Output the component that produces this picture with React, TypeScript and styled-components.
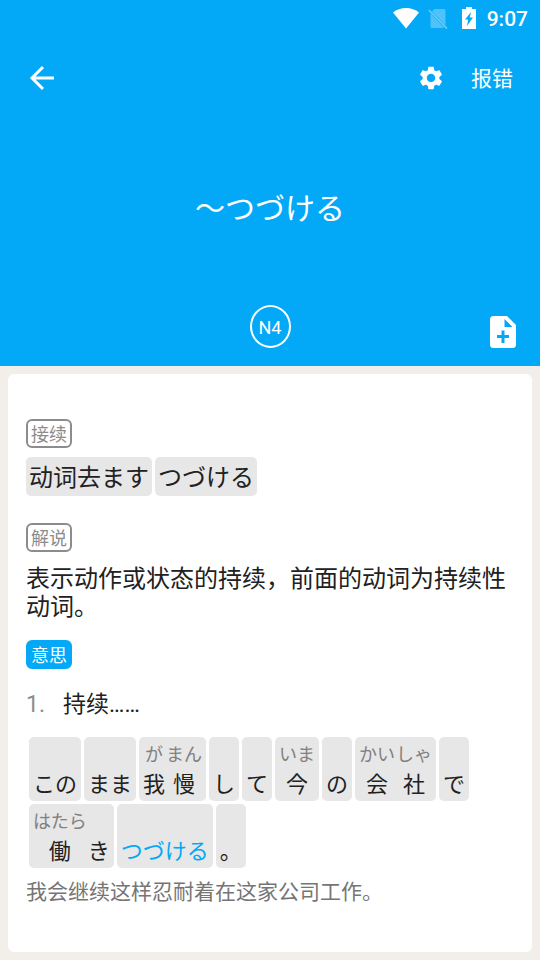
import React from "react";
import styled, { createGlobalStyle } from "styled-components";
import { MdSettings } from "react-icons/md";

const BLUE = "#03a9f7";

const GlobalStyle = createGlobalStyle`
  * { box-sizing: border-box; }
  body {
    margin: 0;
    background: #f2eeea;
    color: #212121;
    font-family: Roboto, "Noto Sans CJK SC", "Noto Sans CJK JP", sans-serif;
  }
  h1, p { margin: 0; font-weight: 400; }
`;

const Page = styled.div`
  display: flex;
  flex-direction: column;
  min-height: 100vh;
`;

const Header = styled.header`
  display: flex;
  flex-direction: column;
  background: ${BLUE};
  color: #fff;
`;

const StatusBar = styled.div`
  display: flex;
  justify-content: flex-end;
  align-items: center;
  height: 36px;
  padding-right: 12px;
`;

const StatusIcon = styled.svg<{ $gap: number }>`
  display: block;
  margin-right: ${(p) => p.$gap}px;
`;

const Clock = styled.time`
  font-size: 21px;
  font-weight: 500;
  line-height: 24px;
  padding-top: 2px;
`;

const AppBar = styled.nav`
  display: flex;
  align-items: center;
  height: 84px;
  padding: 0 27px 0 26px;
`;

const IconButton = styled.button`
  display: flex;
  padding: 0;
  border: 0;
  background: none;
  color: inherit;
  cursor: pointer;
`;

const BarActions = styled.div`
  display: flex;
  align-items: center;
  gap: 26px;
  margin-left: auto;
`;

const TextButton = styled(IconButton)`
  padding-top: 2px;
  font-family: inherit;
  font-size: 21px;
  line-height: 28px;
`;

const Title = styled.h1`
  margin: 62px 0 75px;
  font-family: "Noto Sans CJK JP", sans-serif;
  font-size: 30px;
  line-height: 48px;
  text-align: center;
`;

const HeaderFooter = styled.div`
  display: grid;
  grid-template-columns: 1fr auto 1fr;
  align-items: start;
  height: 61px;
  padding: 0 24px;
`;

const Level = styled.span`
  grid-column: 2;
  display: flex;
  align-items: center;
  justify-content: center;
  width: 41px;
  height: 43px;
  padding-top: 2px;
  border: 2px solid #fff;
  border-radius: 50%;
  font-size: 18px;
  line-height: 24px;
`;

const AddButton = styled(IconButton)`
  justify-self: end;
  margin-top: 11px;
`;

const Card = styled.main`
  flex: 1;
  margin: 8px;
  padding: 45px 18px;
  border-radius: 6px;
  background: #fff;
`;

const Section = styled.section<{ $top?: number }>`
  display: flex;
  flex-direction: column;
  align-items: flex-start;
  margin-top: ${(p) => p.$top ?? 0}px;
`;

const Badge = styled.span<{ $filled?: boolean }>`
  height: 29px;
  padding: 0 3px;
  border: 2px solid ${(p) => (p.$filled ? BLUE : "#8c8c8c")};
  border-radius: 6px;
  background: ${(p) => (p.$filled ? BLUE : "transparent")};
  color: ${(p) => (p.$filled ? "#fff" : "#8c8c8c")};
  font-size: 18px;
  line-height: 27px;
`;

const Patterns = styled.div`
  display: flex;
  flex-wrap: wrap;
  gap: 3px;
  margin-top: 9px;
`;

const Pattern = styled.span`
  padding: 3px 3px 0;
  border-radius: 5px;
  background: #e7e7e7;
  font-size: 24px;
  line-height: 36px;
`;

const Explanation = styled.p`
  margin-top: 13px;
  font-size: 24px;
  line-height: 28px;
`;

const Meaning = styled.div`
  display: flex;
  gap: 18px;
  margin-top: 20px;
  font-size: 23px;
  line-height: 32px;
`;

const Index = styled.span`
  color: #8c8c8c;
`;

const Sentence = styled.div`
  display: flex;
  flex-wrap: wrap;
  gap: 3px;
  margin: 16px 3px 0;
  font-family: "Noto Sans CJK JP", sans-serif;
`;

const Word = styled.span<{ $active?: boolean }>`
  display: flex;
  gap: 1px;
  height: 64px;
  padding: 2px 4px 0;
  border-radius: 5px;
  background: #e7e7e7;
  color: ${(p) => (p.$active ? BLUE : "#212121")};
`;

const Part = styled.span`
  display: flex;
  flex-direction: column;
  align-items: center;
`;

const Reading = styled.span`
  height: 28px;
  color: #808080;
  font-size: 18px;
  line-height: 28px;
`;

const Base = styled.span`
  font-size: 22px;
  line-height: 30px;
`;

const Translation = styled.p`
  margin-top: 10px;
  color: #757575;
  font-size: 21px;
  line-height: 28px;
`;

type WordData = { parts: [string, string?][]; active?: boolean };

const words: WordData[] = [
  { parts: [["この"]] },
  { parts: [["まま"]] },
  { parts: [["我", "が"], ["慢", "まん"]] },
  { parts: [["し"]] },
  { parts: [["て"]] },
  { parts: [["今", "いま"]] },
  { parts: [["の"]] },
  { parts: [["会", "かい"], ["社", "しゃ"]] },
  { parts: [["で"]] },
  { parts: [["働", "はたら"], ["き"]] },
  { parts: [["つづける"]], active: true },
  { parts: [["。"]] },
];

const patterns = ["动词去ます", "つづける"];

export default function App() {
  return (
    <Page lang="zh-CN">
      <GlobalStyle />
      <Header>
        <StatusBar>
          <StatusIcon $gap={9} width="26" height="21" viewBox="0 0 26 21" aria-hidden="true">
            <path d="M13 20.500 0 4.500C3.500 1.500 8 0 13 0s9.500 1.500 13 4.500z" fill="#fff" />
          </StatusIcon>
          <StatusIcon $gap={14} width="20" height="21" viewBox="0 0 20 21" aria-hidden="true">
            <path d="M6.500 1H16q1.500 0 1.500 1.500v15L4 3.500zM2.500 5.500 16 19.500q-.5.5-1 .5H4q-1.500 0-1.500-1.500z" fill="#fff" opacity=".3" />
            <path d="M.8 2 19 20.500" stroke="#fff" strokeWidth="1.700" opacity=".4" />
          </StatusIcon>
          <StatusIcon $gap={11} width="14" height="22" viewBox="0 0 14 22" aria-hidden="true">
            <path d="M4 0h6v2h4v20H0V2h4z" fill="#fff" />
            <path d="M9 5 3 12.500h3.200L5 19l6-8.500H7.800z" fill={BLUE} />
          </StatusIcon>
          <Clock>9:07</Clock>
        </StatusBar>
        <AppBar>
          <IconButton aria-label="返回">
            <svg width="32" height="32" viewBox="0 0 32 32" fill="none" stroke="#fff" strokeWidth="3">
              <path d="M28 16H6M17 5 6 16l11 11" />
            </svg>
          </IconButton>
          <BarActions>
            <IconButton aria-label="设置">
              <MdSettings size={28} />
            </IconButton>
            <TextButton>报错</TextButton>
          </BarActions>
        </AppBar>
        <Title lang="ja">〜つづける</Title>
        <HeaderFooter>
          <Level>N4</Level>
          <AddButton aria-label="添加笔记">
            <svg width="26" height="32" viewBox="0 0 26 32" fill="#fff" fillRule="evenodd">
              <path d="M3.500 0H17l9 9v19.500q0 3.500-3.500 3.500h-19Q0 32 0 28.500v-25Q0 0 3.500 0zM14.500 3v8h8zM11.500 14.500v4.500H7v3h4.500v5h3v-5H19v-3h-4.500v-4.500z" />
            </svg>
          </AddButton>
        </HeaderFooter>
      </Header>
      <Card>
        <Section>
          <Badge>接续</Badge>
          <Patterns>
            {patterns.map((text) => (
              <Pattern key={text}>{text}</Pattern>
            ))}
          </Patterns>
        </Section>
        <Section $top={27}>
          <Badge>解说</Badge>
          <Explanation>表示动作或状态的持续，前面的动词为持续性动词。</Explanation>
        </Section>
        <Section $top={19}>
          <Badge $filled>意思</Badge>
          <Meaning>
            <Index>1.</Index>
            <span>持续……</span>
          </Meaning>
          <Sentence lang="ja">
            {words.map((word, i) => (
              <Word key={i} $active={word.active}>
                {word.parts.map(([base, reading]) => (
                  <Part key={base}>
                    <Reading>{reading}</Reading>
                    <Base>{base}</Base>
                  </Part>
                ))}
              </Word>
            ))}
          </Sentence>
          <Translation>我会继续这样忍耐着在这家公司工作。</Translation>
        </Section>
      </Card>
    </Page>
  );
}
